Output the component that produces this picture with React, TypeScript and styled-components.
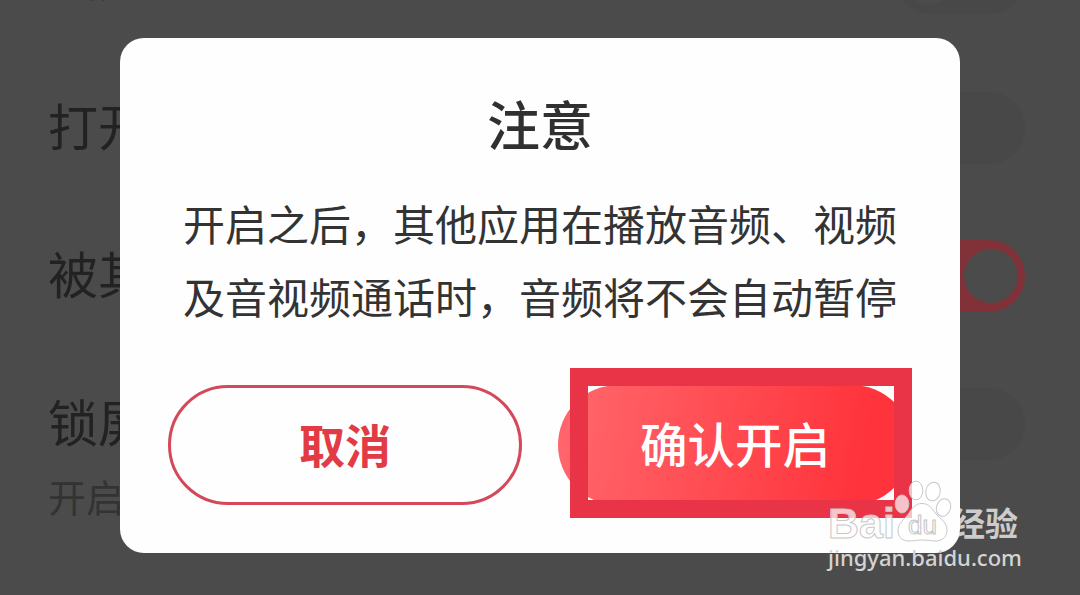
import React from "react";
import styled, { createGlobalStyle } from "styled-components";

const GlobalStyle = createGlobalStyle`
  * {
    box-sizing: border-box;
  }

  body {
    margin: 0;
    background-color: #4b4b4b;
    font-family: "Noto Sans CJK SC", sans-serif;
  }
`;

interface Setting {
  label: string;
  hint?: string;
  on: boolean;
}

const settings: Setting[] = [
  { label: "扫广", on: false },
  { label: "打开", on: false },
  { label: "被其", on: true },
  { label: "锁屏", hint: "开启", on: false },
];

const Paw: React.FC = () => (
  <PawIcon viewBox="0 0 58 64">
    <g fill="#fff" fillOpacity="0.7" stroke="#c8c8c8" strokeWidth="1">
      <ellipse cx="8" cy="24" rx="6.8" ry="9" />
      <ellipse cx="22" cy="10.5" rx="6.8" ry="9.4" />
      <ellipse cx="39" cy="11.5" rx="7.2" ry="9.4" transform="rotate(12 39 11.5)" />
      <ellipse cx="49.5" cy="27.5" rx="7" ry="9" transform="rotate(18 49.5 27.5)" />
      <path d="M28 23.500c7 0 10 5 14 10.500 5 5 11 9 11 16 0 7-5 11-11 11-5 0-8-1-14-1s-8 1-13 1C8 61 4 57 4 50.500c0-7 6-11 10-16 4-6 7-11 14-11Z" />
    </g>
  </PawIcon>
);

export default function App() {
  return (
    <Screen>
      <GlobalStyle />
      <SettingList>
        {settings.map((item, index) => (
          <SettingRow key={index}>
            <SettingText>
              <Label>{item.label}</Label>
              {item.hint && <Hint>{item.hint}</Hint>}
            </SettingText>
            <Switch $on={item.on}>
              <Knob />
            </Switch>
          </SettingRow>
        ))}
      </SettingList>

      <Overlay>
        <Dialog>
          <Title>注意</Title>
          <Message>
            开启之后，其他应用在播放音频、视频
            <br />
            及音视频通话时，音频将不会自动暂停
          </Message>
          <Actions>
            <CancelButton>取消</CancelButton>
            <ConfirmButton>
              确认开启
              <Highlight />
            </ConfirmButton>
          </Actions>
        </Dialog>
      </Overlay>

      <Watermark>
        <Brand>
          <Bai>Bai</Bai>
          <PawBox>
            <Paw />
            <Du>du</Du>
          </PawBox>
          <Jingyan>经验</Jingyan>
        </Brand>
        <Site>jingyan.baidu.com</Site>
      </Watermark>
    </Screen>
  );
}

const Screen = styled.div`
  position: relative;
  width: 1080px;
  height: 595px;
  overflow: hidden;
  background-color: #4b4b4b;
`;

const SettingList = styled.div`
  margin-top: -94px;
`;

const SettingRow = styled.div`
  display: flex;
  justify-content: space-between;
  height: 148px;
  padding: 38px 55px 0 48px;

  &:first-child {
    padding-top: 36px;
  }
`;

const SettingText = styled.div`
  display: flex;
  flex-direction: column;
`;

const Label = styled.span`
  height: 64px;
  line-height: 64px;
  font-size: 50px;
  color: #222;
`;

const Hint = styled.span`
  margin-top: 6px;
  line-height: 76px;
  font-size: 38px;
  color: #333;
`;

const Switch = styled.div<{ $on: boolean }>`
  display: flex;
  justify-content: ${(props) => (props.$on ? "flex-end" : "flex-start")};
  align-items: center;
  width: 130px;
  height: 72px;
  padding: 0 7px;
  border-radius: 36px;
  background-color: ${(props) => (props.$on ? "#813238" : "#484848")};
`;

const Knob = styled.div`
  width: 54px;
  height: 54px;
  border-radius: 50%;
  background-color: #4b4b4b;
`;

const Overlay = styled.div`
  position: absolute;
  inset: 0;
  display: flex;
  justify-content: center;
  align-items: flex-start;
  padding-top: 38px;
`;

const Dialog = styled.div`
  display: flex;
  flex-direction: column;
  align-items: center;
  width: 840px;
  height: 515px;
  padding: 47px 48px 0;
  border-radius: 24px;
  background-color: #fefefe;
`;

const Title = styled.h1`
  margin: 0;
  line-height: 76px;
  font-size: 53px;
  font-weight: 500;
  color: #303030;
`;

const Message = styled.p`
  margin: 25px 0 0;
  line-height: 73px;
  font-size: 42px;
  color: #333;
  white-space: nowrap;
`;

const Actions = styled.div`
  display: flex;
  justify-content: space-between;
  width: 100%;
  margin-top: 53px;
`;

const ActionButton = styled.button`
  width: 354px;
  height: 120px;
  padding: 0 0 5px;
  border-radius: 60px;
  font-family: inherit;
  font-weight: 500;
`;

const CancelButton = styled(ActionButton)`
  border: 3px solid #d4495a;
  background-color: #fefefe;
  font-size: 46px;
  font-weight: 700;
  color: #e23b46;
`;

const ConfirmButton = styled(ActionButton)`
  position: relative;
  border: none;
  background: linear-gradient(100deg, #ff656a 5%, #ff333b 85%);
  font-size: 47.5px;
  color: #fff;
`;

const Highlight = styled.span`
  position: absolute;
  top: -17px;
  left: 12px;
  width: 342px;
  height: 150px;
  border: 18px solid #e93448;
`;

const Watermark = styled.div`
  position: absolute;
  left: 828px;
  top: 480px;
  width: 194px;
`;

const Brand = styled.div`
  display: flex;
  align-items: flex-end;
  height: 64px;
  color: rgba(255, 255, 255, 0.72);
`;

const Bai = styled.span`
  width: 66px;
  line-height: 42px;
  font-family: "Liberation Sans", sans-serif;
  font-size: 43px;
  font-weight: 700;
  -webkit-text-stroke: 1px #c8c8c8;
`;

const PawBox = styled.div`
  position: relative;
  width: 58px;
  height: 64px;
`;

const PawIcon = styled.svg`
  display: block;
  width: 58px;
  height: 64px;
`;

const Du = styled.span`
  position: absolute;
  left: 14px;
  top: 31px;
  line-height: 28px;
  font-family: "Liberation Sans", sans-serif;
  font-size: 26px;
  -webkit-text-stroke: 1px #c4c4c4;
`;

const Jingyan = styled.span`
  line-height: 44px;
  font-size: 33px;
  font-weight: 700;
`;

const Site = styled.div`
  line-height: 27px;
  font-family: "Noto Sans", sans-serif;
  font-size: 22px;
  font-weight: 500;
  color: #d4d4d4;
`;
